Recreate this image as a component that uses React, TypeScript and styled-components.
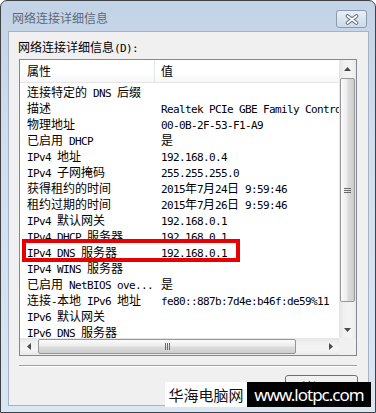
import React from "react";
import styled, { createGlobalStyle } from "styled-components";

const GlobalStyle = createGlobalStyle`
    html, body {
        margin: 0;
        padding: 0;
        background: #ffffff;
    }
    body {
        font-family: "Noto Sans CJK SC", sans-serif;
        font-size: 12px;
        color: #000;
    }
`;

const Window = styled.div`
    position: relative;
    box-sizing: border-box;
    width: 376px;
    height: 413px;
    border: 1px solid #3e4247;
    border-radius: 7px 7px 0 0;
    background: linear-gradient(180deg, #c3d3e6 0%, #d0deee 35%, #dbe6f3 100%);
    padding: 0 6px 6px 7px;
    display: flex;
    flex-direction: column;
    overflow: hidden;
`;

const TitleBar = styled.div`
    height: 30px;
    display: flex;
    align-items: flex-start;
`;

const Title = styled.div`
    margin-top: 10px;
    padding-left: 4px;
    line-height: 14px;
    color: #5f6a77;
`;

const CloseButton = styled.div`
    box-sizing: border-box;
    margin: 9px 2px 0 auto;
    width: 31px;
    height: 18px;
    border: 1px solid #8c9aad;
    border-radius: 3px;
    background: linear-gradient(180deg, #e9eff6 0%, #dbe4ee 50%, #cfdae7 100%);
    display: flex;
    align-items: center;
    justify-content: center;
`;

const Client = styled.div`
    flex: 1;
    box-sizing: border-box;
    border: 1px solid #a4b2c3;
    background: #f0f0f0;
    padding: 8px 10px 0 9px;
    display: flex;
    flex-direction: column;
`;

const Label = styled.div`
    line-height: 14px;
    margin-bottom: 3px;
`;

const ListBox = styled.div`
    box-sizing: border-box;
    width: 338px;
    height: 297px;
    margin-left: 1px;
    border: 1px solid #828790;
    background: #ffffff;
    display: grid;
    grid-template-columns: 1fr 17px;
    grid-template-rows: 1fr 17px;
`;

const Content = styled.div`
    overflow: hidden;
`;

const Header = styled.div`
    box-sizing: border-box;
    height: 23px;
    display: grid;
    grid-template-columns: 135px 1fr;
    border-bottom: 1px solid #e5e5e5;
    background: linear-gradient(180deg, #ffffff 0%, #ffffff 55%, #f6f7f9 100%);
    line-height: 22px;
`;

const HeaderCell = styled.div<{ $first?: boolean }>`
    padding-left: ${(p) => (p.$first ? "7px" : "6px")};
    border-right: ${(p) => (p.$first ? "1px solid #e3e8ee" : "none")};
`;

const Rows = styled.div`
    padding-top: 1px;
`;

const Row = styled.div`
    position: relative;
    height: 16px;
    line-height: 16px;
    display: grid;
    grid-template-columns: 135px 1fr;
    white-space: pre;
`;

const Cell = styled.div<{ $first?: boolean }>`
    padding-left: ${(p) => (p.$first ? "7px" : "6px")};
    overflow: hidden;
`;

const Half = styled.span`
    font-family: "DejaVu Sans Mono", "Liberation Mono", monospace;
    font-size: 11px;
    letter-spacing: -0.62px;
`;

const Mark = styled.div`
    position: absolute;
    left: 2px;
    top: -5px;
    width: 218px;
    height: 23px;
    box-sizing: border-box;
    border: 4px solid #e80000;
    pointer-events: none;
`;

const VScroll = styled.div`
    display: flex;
    flex-direction: column;
    background: linear-gradient(90deg, #e4e4e4 0%, #f1f1f1 30%, #f4f4f4 70%, #e8e8e8 100%);
`;

const HScroll = styled.div`
    display: flex;
    background: linear-gradient(180deg, #e4e4e4 0%, #f1f1f1 30%, #f4f4f4 70%, #e8e8e8 100%);
`;

const Arrow = styled.div`
    flex: 0 0 17px;
    display: flex;
    align-items: center;
    justify-content: center;
`;

const Gap = styled.div`
    flex: 1;
`;

const Thumb = styled.div<{ $vertical?: boolean; $size: number }>`
    box-sizing: border-box;
    flex: 0 0 ${(p) => p.$size}px;
    margin: ${(p) => (p.$vertical ? "1px 1px 0 1px" : "1px 0 1px 1px")};
    border: 1px solid #979797;
    border-radius: 2px;
    background: linear-gradient(
        ${(p) => (p.$vertical ? "90deg" : "180deg")},
        #fbfbfb 0%,
        #ececec 45%,
        #dcdcdc 55%,
        #cdcdcd 100%
    );
    display: flex;
    align-items: center;
    justify-content: center;
`;

const Corner = styled.div`
    background: #f0f0f0;
`;

const Separator = styled.div`
    width: 338px;
    margin: 9px 0 0 1px;
    border-top: 1px solid #a0a0a0;
    border-bottom: 1px solid #ffffff;
`;

const Button = styled.div`
    align-self: flex-end;
    box-sizing: border-box;
    margin-top: 8px;
    width: 73px;
    height: 23px;
    border: 1px solid #707070;
    border-radius: 3px;
    background: linear-gradient(180deg, #f2f2f2 0%, #ebebeb 50%, #dddddd 50%, #cfcfcf 100%);
    display: flex;
    align-items: center;
    justify-content: center;
    line-height: 14px;
`;

const Watermark = styled.div`
    position: absolute;
    left: 164px;
    top: 381px;
    height: 25px;
    display: flex;
`;

const WhiteTag = styled.div`
    width: 82px;
    background: #ffffff;
    color: #111111;
    font-size: 15px;
    display: flex;
    align-items: center;
    justify-content: center;
`;

const BlackTag = styled.div`
    width: 124px;
    background: #000000;
    color: #ffffff;
    font-family: "Noto Sans", sans-serif;
    font-size: 17px;
    letter-spacing: -1px;
    display: flex;
    align-items: center;
    justify-content: center;
`;

function Txt({ text }: { text: string }) {
    const parts = text.split(/([\x20-\x7e]+)/).filter(Boolean);
    return (
        <>
            {parts.map((p, i) =>
                /^[\x20-\x7e]+$/.test(p) ? <Half key={i}>{p}</Half> : <span key={i}>{p}</span>
            )}
        </>
    );
}

const rows: [string, string][] = [
    ["连接特定的 DNS 后缀", ""],
    ["描述", "Realtek PCIe GBE Family Controller"],
    ["物理地址", "00-0B-2F-53-F1-A9"],
    ["已启用 DHCP", "是"],
    ["IPv4 地址", "192.168.0.4"],
    ["IPv4 子网掩码", "255.255.255.0"],
    ["获得租约的时间", "2015年7月24日 9:59:46"],
    ["租约过期的时间", "2015年7月26日 9:59:46"],
    ["IPv4 默认网关", "192.168.0.1"],
    ["IPv4 DHCP 服务器", "192.168.0.1"],
    ["IPv4 DNS 服务器", "192.168.0.1"],
    ["IPv4 WINS 服务器", ""],
    ["已启用 NetBIOS ove...", "是"],
    ["连接-本地 IPv6 地址", "fe80::887b:7d4e:b46f:de59%11"],
    ["IPv6 默认网关", ""],
    ["IPv6 DNS 服务器", ""],
];

const ARROW = "#4a4a4a";

export default function App() {
    return (
        <>
            <GlobalStyle />
            <Window>
                <TitleBar>
                    <Title>网络连接详细信息</Title>
                    <CloseButton>
                        <svg width="14" height="11" viewBox="0 0 14 11">
                            <path d="M2.5 2 L11.5 9 M11.5 2 L2.5 9" stroke="#56677c" strokeWidth="3.6" strokeLinecap="round" />
                            <path d="M2.5 2 L11.5 9 M11.5 2 L2.5 9" stroke="#ffffff" strokeWidth="1.8" strokeLinecap="round" />
                        </svg>
                    </CloseButton>
                </TitleBar>
                <Client>
                    <Label>
                        <Txt text="网络连接详细信息(D):" />
                    </Label>
                    <ListBox>
                        <Content>
                            <Header>
                                <HeaderCell $first>属性</HeaderCell>
                                <HeaderCell>值</HeaderCell>
                            </Header>
                            <Rows>
                                {rows.map(([k, v], i) => (
                                    <Row key={i}>
                                        <Cell $first>
                                            <Txt text={k} />
                                        </Cell>
                                        <Cell>
                                            <Txt text={v} />
                                        </Cell>
                                        {i === 10 && <Mark />}
                                    </Row>
                                ))}
                            </Rows>
                        </Content>
                        <VScroll>
                            <Arrow>
                                <svg width="7" height="4"><path d="M3.5 0 L7 4 L0 4Z" fill={ARROW} /></svg>
                            </Arrow>
                            <Thumb $vertical $size={224}>
                                <svg width="7" height="7">
                                    <path d="M0 1.5H7M0 3.5H7M0 5.5H7" stroke="#6a6a6a" strokeWidth="1" />
                                </svg>
                            </Thumb>
                            <Gap />
                            <Arrow>
                                <svg width="7" height="4"><path d="M0 0 L7 0 L3.5 4Z" fill={ARROW} /></svg>
                            </Arrow>
                        </VScroll>
                        <HScroll>
                            <Arrow>
                                <svg width="4" height="7"><path d="M4 0 L4 7 L0 3.5Z" fill={ARROW} /></svg>
                            </Arrow>
                            <Thumb $size={258}>
                                <svg width="7" height="7">
                                    <path d="M1.5 0V7M3.5 0V7M5.5 0V7" stroke="#6a6a6a" strokeWidth="1" />
                                </svg>
                            </Thumb>
                            <Gap />
                            <Arrow>
                                <svg width="4" height="7"><path d="M0 0 L4 3.5 L0 7Z" fill={ARROW} /></svg>
                            </Arrow>
                        </HScroll>
                        <Corner />
                    </ListBox>
                    <Separator />
                    <Button>
                        <Txt text="关闭(C)" />
                    </Button>
                </Client>
                <Watermark>
                    <WhiteTag>华海电脑网</WhiteTag>
                    <BlackTag>www.lotpc.com</BlackTag>
                </Watermark>
            </Window>
        </>
    );
}
